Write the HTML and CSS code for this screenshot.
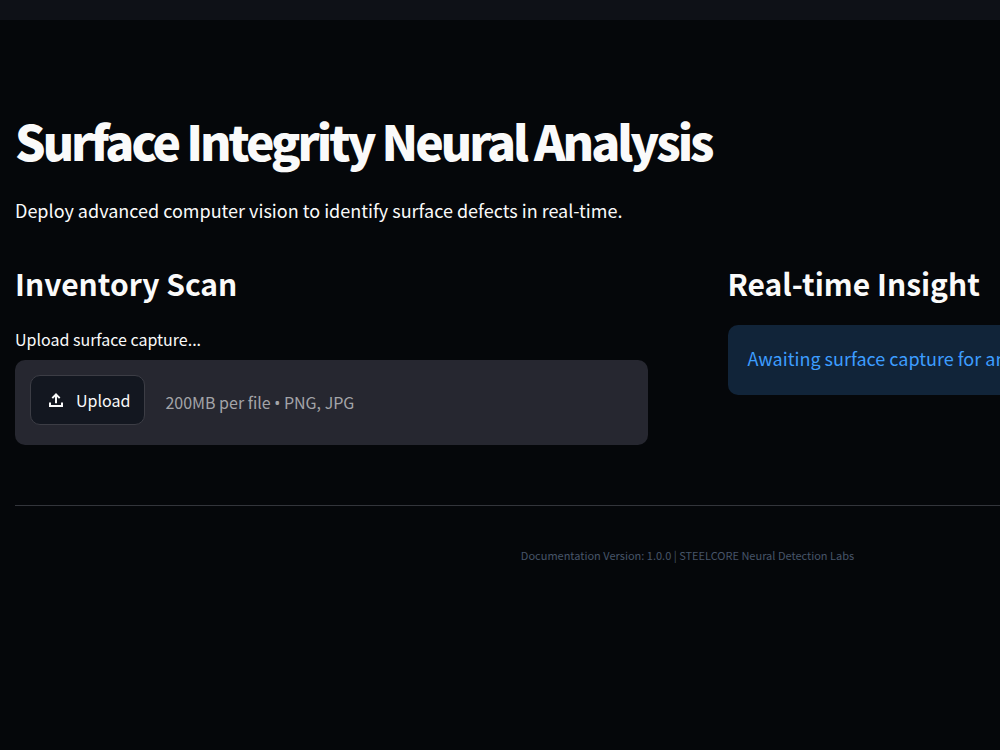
FILE: index.html
```html
<!DOCTYPE html>
<html lang="en">
<head>
  <meta charset="UTF-8">
  <title>Surface Integrity Neural Analysis</title>
  <link rel="stylesheet" href="styles.css">
</head>
<body>
  <header class="topbar"></header>
  <main class="page">
    <h1>Surface Integrity Neural Analysis</h1>
    <p class="lead">Deploy advanced computer vision to identify surface defects in real-time.</p>

    <div class="columns">
      <section>
        <h2>Inventory Scan</h2>
        <label class="upload-label" for="capture">Upload surface capture...</label>
        <div class="dropzone">
          <input type="file" id="capture" accept=".png,.jpg" hidden>
          <button type="button" class="upload-btn" id="uploadBtn">
            <svg viewBox="0 0 24 24" width="20" height="20" fill="currentColor" aria-hidden="true">
              <path d="M10.800 16V8.200L8.400 10.600 6.700 8.900 12 3.600l5.300 5.300-1.700 1.700-2.400-2.400V16zM3.600 20.400v-5.400H6v3h12v-3h2.400v5.400z"/>
            </svg>
            Upload
          </button>
          <span class="limits">200MB per file <span class="dot">•</span> PNG, JPG</span>
        </div>
      </section>
      <section>
        <h2>Real-time Insight</h2>
        <div class="info">Awaiting surface capture for analysis.</div>
      </section>
    </div>

    <hr>
    <footer>Documentation Version: 1.0.0 | STEELCORE Neural Detection Labs</footer>
  </main>
  <script>
    document.getElementById('uploadBtn').addEventListener('click', () => {
      document.getElementById('capture').click();
    });
  </script>
</body>
</html>
```
FILE: styles.css
```css
* {
  box-sizing: border-box;
}
body {
  margin: 0;
  min-height: 100vh;
  background: #05070a;
  color: #fafafa;
  font-family: "Noto Sans CJK SC", "Noto Sans", sans-serif;
  overflow-x: hidden;
}
.topbar {
  height: 20px;
  background: #0e1117;
}
.page {
  min-width: 1375px;
  padding: 86px 15px 0;
}
h1 {
  margin: 0;
  font-size: 48px;
  line-height: 68px;
  font-weight: 800;
  letter-spacing: -3px;
}
.lead {
  margin: 21px 0 0;
  font-size: 18px;
  line-height: 30px;
}
.columns {
  display: grid;
  grid-template-columns: 1fr 1fr;
  gap: 80px;
  margin-top: 36px;
}
h2 {
  margin: 0;
  font-size: 30px;
  line-height: 44px;
  font-weight: 600;
}
.upload-label {
  display: block;
  margin-top: 22px;
  font-size: 16px;
  line-height: 24px;
}
.dropzone {
  display: flex;
  align-items: flex-start;
  gap: 20px;
  margin-top: 9px;
  padding: 15px;
  height: 85px;
  border-radius: 10px;
  background: #262730;
}
.upload-btn {
  display: flex;
  align-items: center;
  gap: 10px;
  height: 50px;
  padding: 0 14px 0 15px;
  border: 1px solid #3c3d45;
  border-radius: 10px;
  background: #131720;
  color: #fafafa;
  font: inherit;
  font-size: 16px;
}
.limits {
  color: #a3a4a8;
  font-size: 16px;
  line-height: 54px;
}
.dot {
  font-family: "Noto Sans", sans-serif;
}
.info {
  margin-top: 20px;
  padding: 19px 20px 23px;
  border-radius: 10px;
  background: #112439;
  color: #3d9dff;
  font-size: 18px;
  line-height: 28px;
}
hr {
  margin: 60px 0 0;
  border: 0;
  border-top: 1px solid #33353b;
}
footer {
  margin-top: 39px;
  color: #475569;
  font-size: 11px;
  line-height: 20px;
  text-align: center;
}
```
